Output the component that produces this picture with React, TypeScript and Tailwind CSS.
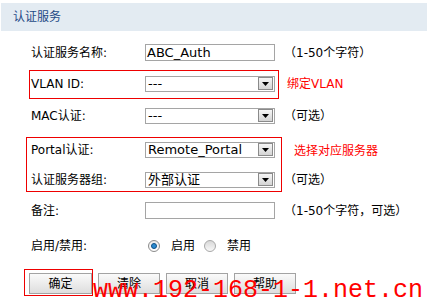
import React from "react";

const FONT = { fontFamily: '"DejaVu Sans", "Noto Sans CJK SC", sans-serif' };

function Select({ value }: { value: string }) {
  return (
    <div className="flex h-[16px] w-[130px] items-center border border-[#a5a5a5] bg-white">
      <span className="pl-[2px] text-[13px] leading-none text-black">{value}</span>
      <div className="ml-auto mr-[1px] flex h-[13px] w-[15px] items-center justify-center border border-[#8a8a8a] bg-gradient-to-b from-[#f6f6f6] to-[#d4d4d4]">
        <svg width="7" height="4" viewBox="0 0 7 4">
          <path d="M0 0H7L3.5 4Z" fill="#000" />
        </svg>
      </div>
    </div>
  );
}

function Input({ value }: { value?: string }) {
  return (
    <div className="flex h-[17px] w-[130px] items-center border border-[#a5a5a5] bg-white">
      <span className="pl-[1px] text-[13px] leading-none text-black">{value}</span>
    </div>
  );
}

function Row({
  h,
  label,
  children,
  note,
}: {
  h: string;
  label: string;
  children: React.ReactNode;
  note?: React.ReactNode;
}) {
  return (
    <div className={`flex items-center pl-[31px] ${h}`}>
      <div className="w-[114px] text-[12px] leading-none text-black">{label}</div>
      <div className="w-[130px]">{children}</div>
      <div className="pl-[9px] text-[12px] leading-none">{note}</div>
    </div>
  );
}

function Button({ label, w }: { label: string; w: string }) {
  return (
    <div
      className={`flex h-[21px] ${w} items-center justify-center border border-[#a3a3a3] bg-gradient-to-b from-[#fafafa] to-[#dedede] text-[12px] leading-none text-black`}
    >
      {label}
    </div>
  );
}

export default function App() {
  return (
    <div className="relative h-[305px] w-[427px] overflow-hidden bg-white" style={FONT}>
      <div className="ml-[1px] mt-[3px] flex h-[28px] items-center bg-[#e3ebf2] pl-[12px] text-[12px] leading-none text-[#1f4a86]">
        认证服务
      </div>

      <div className="mt-[7px]">
        <Row h="h-[29px]" label="认证服务名称:" note={<span className="text-black">（1-50个字符）</span>}>
          <Input value="ABC_Auth" />
        </Row>
        <Row
          h="h-[33px]"
          label="VLAN ID:"
          note={<span className="pl-[3px] text-[#ff0000]">绑定VLAN</span>}
        >
          <Select value="---" />
        </Row>
        <Row h="h-[31px]" label="MAC认证:" note={<span className="text-black">（可选）</span>}>
          <Select value="---" />
        </Row>
        <Row
          h="h-[37px]"
          label="Portal认证:"
          note={<span className="relative top-[1px] pl-[10px] text-[#ff0000]">选择对应服务器</span>}
        >
          <Select value="Remote_Portal" />
        </Row>
        <Row h="h-[23px]" label="认证服务器组:" note={<span className="text-black">（可选）</span>}>
          <Select value="外部认证" />
        </Row>
        <Row h="h-[39px]" label="备注:" note={<span className="text-black">（1-50个字符，可选）</span>}>
          <Input />
        </Row>
        <div className="flex h-[32px] items-center pl-[31px] text-[12px] leading-none text-black">
          <div className="w-[117px]">启用/禁用:</div>
          <div className="flex h-[12px] w-[12px] items-center justify-center rounded-full border border-[#8c8c8c] bg-gradient-to-b from-[#e8e8e8] to-[#ffffff]">
            <div className="h-[6px] w-[6px] rounded-full border border-[#0d4f86] bg-[#2a8ad0]" />
          </div>
          <span className="ml-[11px]">启用</span>
          <div className="ml-[9px] h-[12px] w-[12px] rounded-full border border-[#a8a8a8] bg-gradient-to-b from-[#d8d8d8] to-[#f8f8f8]" />
          <span className="ml-[11px]">禁用</span>
        </div>
        <div className="mt-[11px] flex gap-[6px] pl-[29px]">
          <Button label="确定" w="w-[63px]" />
          <Button label="清除" w="w-[62px]" />
          <Button label="取消" w="w-[62px]" />
          <Button label="帮助" w="w-[62px]" />
        </div>
      </div>

      {/* annotation boxes */}
      <div className="pointer-events-none absolute left-[29px] top-[70px] h-[29px] w-[250px] border border-[#ee0000]" />
      <div className="pointer-events-none absolute left-[26px] top-[137px] h-[55px] w-[256px] border border-[#ee0000]" />
      <div className="pointer-events-none absolute left-[24px] top-[269px] h-[27px] w-[69px] border border-[#ee0000]" />

      {/* watermark */}
      <div
        className="pointer-events-none absolute left-[93px] top-[278px] whitespace-nowrap text-[25px] leading-[25px] text-[#ff0000]"
        style={{ fontFamily: '"Liberation Mono", monospace' }}
      >
        www.192-168-1-1.net.cn
      </div>
    </div>
  );
}
